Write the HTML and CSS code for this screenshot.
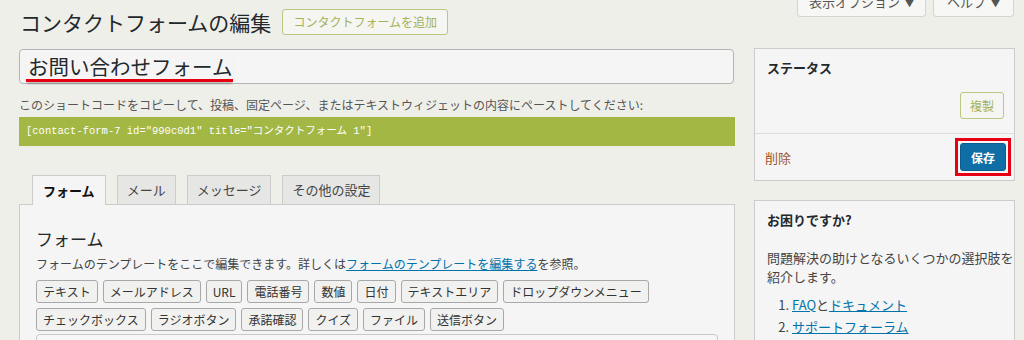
FILE: index.html
```html
<!DOCTYPE html>
<html lang="ja">
<head>
    <meta charset="UTF-8">
    <meta name="viewport" content="width=device-width, initial-scale=1.0">
    <title>コンタクトフォームの編集</title>
    <link rel="stylesheet" href="styles.css">
</head>
<body>
    <div class="screen-meta">
        <button class="meta-link">表示オプション <span class="arrow">▼</span></button>
        <button class="meta-link">ヘルプ <span class="arrow">▼</span></button>
    </div>

    <div class="page-head">
        <h1>コンタクトフォームの編集</h1>
        <a href="#" class="add-new">コンタクトフォームを追加</a>
    </div>

    <div class="columns">
        <div class="main">
            <div class="title-field"><span class="marked">お問い合わせフォーム</span></div>
            <p class="hint">このショートコードをコピーして、投稿、固定ページ、またはテキストウィジェットの内容にペーストしてください:</p>
            <div class="shortcode">[contact-form-7 id="990c0d1" title="コンタクトフォーム 1"]</div>

            <div class="tabs">
                <span class="tab active">フォーム</span>
                <span class="tab">メール</span>
                <span class="tab">メッセージ</span>
                <span class="tab">その他の設定</span>
            </div>
            <div class="panel">
                <h2>フォーム</h2>
                <p class="panel-desc">フォームのテンプレートをここで編集できます。詳しくは<a href="#">フォームのテンプレートを編集する</a>を参照。</p>
                <div class="tag-buttons">
                    <button>テキスト</button>
                    <button>メールアドレス</button>
                    <button>URL</button>
                    <button>電話番号</button>
                    <button>数値</button>
                    <button>日付</button>
                    <button>テキストエリア</button>
                    <button>ドロップダウンメニュー</button>
                    <button>チェックボックス</button>
                    <button>ラジオボタン</button>
                    <button>承諾確認</button>
                    <button>クイズ</button>
                    <button>ファイル</button>
                    <button>送信ボタン</button>
                </div>
                <div class="template-box"></div>
            </div>
        </div>

        <div class="side">
            <div class="box status">
                <h3>ステータス</h3>
                <div class="status-body">
                    <button class="copy">複製</button>
                </div>
                <div class="status-foot">
                    <a href="#" class="delete">削除</a>
                    <span class="save-mark"><button class="save">保存</button></span>
                </div>
            </div>

            <div class="box help">
                <h3>お困りですか?</h3>
                <p>問題解決の助けとなるいくつかの選択肢を<br>紹介します。</p>
                <ol>
                    <li><a href="#">FAQ</a>と<a href="#">ドキュメント</a></li>
                    <li><a href="#">サポートフォーラム</a></li>
                </ol>
            </div>
        </div>
    </div>
</body>
</html>
```

FILE: styles.css
```css
body {
    font-family: "Noto Sans CJK JP", "Noto Sans", sans-serif;
    margin: 0;
    padding: 0;
    background-color: #efefea;
    color: #23282d;
    overflow: hidden;
}
a {
    color: #0073aa;
}
button {
    font-family: inherit;
    cursor: pointer;
}

/* top right tabs */
.screen-meta {
    float: right;
    display: flex;
    gap: 7px;
    margin: -12px 10px 0 0;
}
.meta-link {
    background: #f7f7f5;
    border: 1px solid #d4d4d0;
    border-top: none;
    border-radius: 0 0 4px 4px;
    color: #555;
    font-size: 13px;
    line-height: 18px;
    height: 29px;
    padding: 5px 0 6px;
    white-space: nowrap;
    text-align: center;
}
.meta-link:first-child {
    width: 129px;
}
.meta-link:last-child {
    width: 81px;
}
.arrow {
    font-size: 9px;
    margin-left: 2px;
}

/* heading */
.page-head {
    display: flex;
    align-items: center;
    gap: 11px;
    padding: 9px 0 0 20px;
}
h1 {
    font-size: 21px;
    font-weight: 400;
    line-height: 26px;
    margin: 0;
}
.add-new {
    border: 1px solid #bcc683;
    border-radius: 3px;
    color: #a4b25a;
    background: #f5f5f2;
    font-size: 12px;
    text-decoration: none;
    line-height: 24px;
    padding: 0 10px;
}

.columns {
    display: flex;
    gap: 19px;
    padding: 0 9px 0 19px;
}
.main {
    width: 716px;
}
.side {
    width: 261px;
}

/* title */
.title-field {
    margin-top: 14px;
    height: 33px;
    border: 1px solid #b4b4b4;
    border-radius: 4px;
    background: #f5f5f5;
    padding-left: 6px;
    width: 707px;
}
.marked {
    display: inline-block;
    font-size: 20.5px;
    line-height: 25px;
    margin-top: 4px;
    padding: 0 1px 0 2px;
    border-bottom: 3px solid #e60012;
    box-shadow: 0 3px 2px -1px rgba(0,0,0,0.22);
}
.hint {
    font-size: 12px;
    color: #555;
    line-height: 16px;
    margin: 13px 0 4px;
}
.shortcode {
    background: #a3b745;
    color: #fff;
    font-family: "Liberation Mono", "Noto Sans CJK JP", monospace;
    font-size: 10.5px;
    line-height: 29px;
    height: 29px;
    padding: 0 7px;
}

/* tabs */
.tabs {
    display: flex;
    gap: 11px;
    margin-top: 29px;
    padding-left: 13px;
}
.tab {
    border: 1px solid #ccc;
    border-bottom: none;
    background: #e6e6e4;
    color: #444;
    font-size: 13px;
    line-height: 28px;
    padding: 0 9px;
}
.tab.active {
    background: #f5f5f5;
    color: #111;
    font-weight: 700;
    margin-bottom: -1px;
    line-height: 29px;
    padding: 0 10px;
    position: relative;
}
.panel {
    background: #f5f5f5;
    border: 1px solid #ccc;
    padding: 22px 16px 0;
    height: 160px;
}
.panel h2 {
    font-size: 17px;
    font-weight: 400;
    margin: 0;
    line-height: 24px;
}
.panel-desc {
    font-size: 12px;
    color: #444;
    margin: 4px 0 7px;
    line-height: 18px;
}
.tag-buttons {
    display: flex;
    flex-wrap: wrap;
    gap: 5px 5px;
    width: 660px;
}
.tag-buttons button {
    background: #f1f1ef;
    border: 1px solid #a8a8a8;
    border-radius: 3px;
    color: #333;
    font-size: 12px;
    height: 23px;
    padding: 0 6px;
}
.template-box {
    margin-top: 3px;
    height: 40px;
    border: 1px solid #c8c8c8;
    border-radius: 4px;
    background: #f7f7f7;
}

/* sidebar boxes */
.box {
    background: #f5f5f5;
    border: 1px solid #ccc;
}
.box h3 {
    font-size: 13px;
    font-weight: 700;
    margin: 0;
    line-height: 18px;
}
.status {
    margin-top: 13px;
}
.status h3 {
    padding: 10px 12px 0;
}
.status-body {
    display: flex;
    justify-content: flex-end;
    padding: 15px 10px 14px;
}
.copy {
    background: #f5f5f2;
    border: 1px solid #bcc683;
    border-radius: 3px;
    color: #a4b25a;
    font-size: 12px;
    height: 27px;
    width: 44px;
    padding: 0;
}
.status-foot {
    border-top: 1px solid #ddd;
    display: flex;
    justify-content: space-between;
    align-items: center;
    padding: 0 3px 0 10px;
    height: 46px;
}
.delete {
    color: #9e5431;
    text-decoration: none;
    font-size: 13px;
}
.save-mark {
    display: flex;
    border: 3px solid #e60012;
    padding: 2px;
}
.save {
    background: #0e6ea5;
    border: 1px solid #0a5d8e;
    border-radius: 3px;
    color: #fff;
    font-size: 12px;
    font-weight: 700;
    height: 28px;
    width: 46px;
    padding: 0;
}
.help {
    margin-top: 19px;
    padding: 10px 6px 20px 12px;
}
.help p {
    font-size: 13px;
    color: #444;
    line-height: 19px;
    margin: 19px 0 8px;
    white-space: nowrap;
}
.help ol {
    font-size: 13px;
    color: #444;
    margin: 0;
    padding-left: 25px;
}
.help li {
    line-height: 22px;
}
```
